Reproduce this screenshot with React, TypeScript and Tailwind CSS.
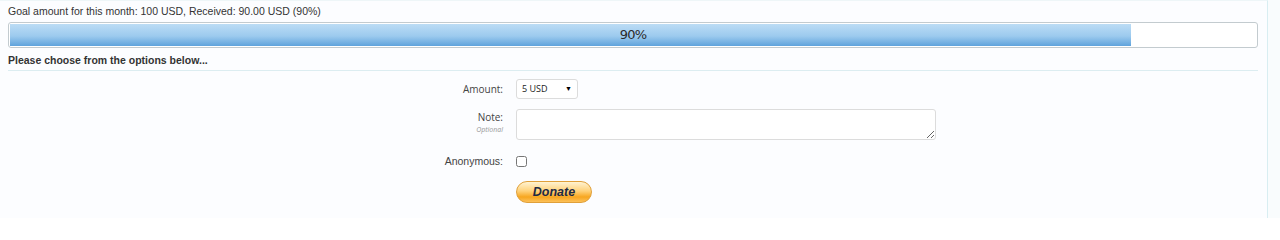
import React from "react";

export default function App() {
  return (
    <div className="w-[1280px] h-[218px] bg-[#fcfdff] flex overflow-hidden font-['Liberation_Sans',Arial,sans-serif] text-[#333]">
      <div className="w-[1268px] h-full border-r border-[#d8eef2] border-t border-t-[#eef6f8] flex flex-col pl-[8px] pr-[9px]">
        <div className="h-[21px] flex items-center text-[10.5px] text-[#333]">
          Goal amount for this month: 100 USD, Received: 90.00 USD (90%)
        </div>
        <div className="relative h-[26px] border border-[#c3cbcf] rounded-[3px] bg-white p-[1px]">
          <div className="h-full w-[90%] bg-[linear-gradient(to_bottom,#bcdcf5,#9ccaee_55%,#5fa3dc)]" />
          <div className="absolute inset-0 flex items-center justify-center text-[13px] text-[#2a2a2a] font-['DejaVu_Sans',sans-serif] tracking-[-0.8px]">
            90%
          </div>
        </div>
        <div className="mt-[4px] h-[19px] flex items-center text-[10.5px] font-bold text-[#333] border-b border-[#dcedf1]">
          Please choose from the options below...
        </div>
        <div className="flex flex-col pt-[8px] font-['Open_Sans',sans-serif] text-[10px] text-[#444]">
          <div className="flex items-center h-[20px]">
            <div className="w-[495px] text-right">Amount:</div>
            <div className="ml-[13px] w-[62px] h-[20px] border border-[#dcdcdc] rounded-[3px] bg-white flex items-center justify-between px-[5px] text-[9px] text-[#222]">
              <span>5 USD</span>
              <span className="text-[7px] text-black">▼</span>
            </div>
          </div>
          <div className="flex mt-[10px]">
            <div className="w-[495px] text-right flex flex-col items-end pt-[1px]">
              <span className="leading-[14px]">Note:</span>
              <span className="text-[7px] italic text-[#9a9a9a] leading-[12px]">Optional</span>
            </div>
            <textarea className="ml-[13px] w-[420px] h-[31px] border border-[#dcdcdc] rounded-[3px] bg-white outline-none resize-y" />
          </div>
          <div className="flex items-center mt-[15px] h-[13px]">
            <div className="w-[495px] text-right font-['Liberation_Sans',Arial,sans-serif] text-[10.5px]">Anonymous:</div>
            <input type="checkbox" className="ml-[13px] w-[11px] h-[11px] m-0" />
          </div>
          <div className="flex mt-[13px]">
            <div className="w-[495px]" />
            <button className="ml-[13px] w-[76px] h-[22px] rounded-full border border-[#e0a03a] bg-[linear-gradient(to_bottom,#fff3d2,#ffd27a_45%,#f7a61f_75%,#fcc15a)] text-[12.5px] font-bold italic text-[#1e2a44] font-['Liberation_Sans',Arial,sans-serif] flex items-center justify-center">
              Donate
            </button>
          </div>
        </div>
      </div>
      <div className="flex-1 bg-[#f9fcfd]" />
    </div>
  );
}
